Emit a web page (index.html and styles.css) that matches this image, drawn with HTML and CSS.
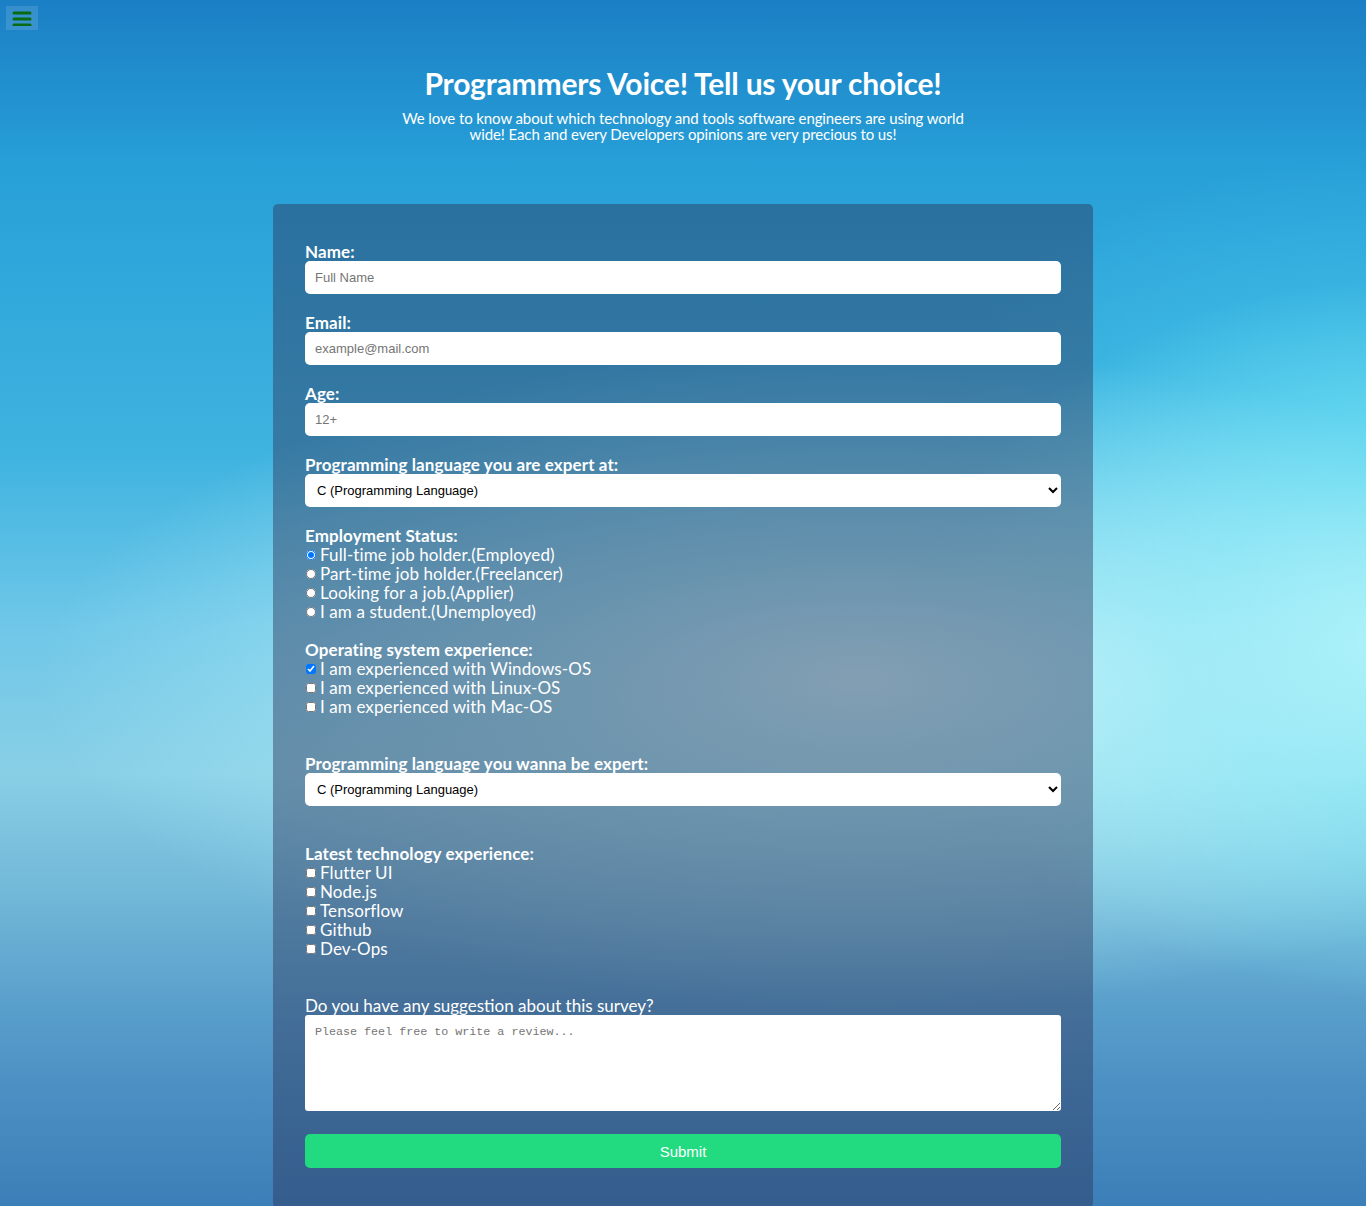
FILE: index.html
```html
<!DOCTYPE html>
<html lang="en">
<head>
<meta charset="utf-8">
<title>Programmers Voice Survey</title>
<link rel="stylesheet" href="styles.css">
</head>
<body>
<button class="menu-btn" aria-label="Menu">
  <svg width="20" height="16" viewBox="0 0 20 16"><g stroke="#0a6a12" stroke-width="3" stroke-linecap="round"><line x1="2" y1="3" x2="18" y2="3"/><line x1="2" y1="9" x2="18" y2="9"/><line x1="2" y1="15" x2="18" y2="15"/></g></svg>
</button>
<header class="header">
  <h1 class="title">Programmers Voice! Tell us your choice!</h1>
  <p class="subtitle">We love to know about which technology and tools software engineers are using world wide! Each and every Developers opinions are very precious to us!</p>
</header>
<form class="survey">
  <div class="group">
    <label class="label" for="name">Name:</label>
    <input class="field" id="name" type="text" placeholder="Full Name">
  </div>
  <div class="group">
    <label class="label" for="email">Email:</label>
    <input class="field" id="email" type="email" placeholder="example@mail.com">
  </div>
  <div class="group">
    <label class="label" for="age">Age:</label>
    <input class="field" id="age" type="number" placeholder="12+">
  </div>
  <div class="group">
    <label class="label" for="lang">Programming language you are expert at:</label>
    <select class="field select" id="lang">
      <option>C (Programming Language)</option>
      <option>C++</option>
      <option>Java</option>
      <option>Python</option>
      <option>JavaScript</option>
    </select>
  </div>
  <div class="group">
    <div class="label">Employment Status:</div>
    <label class="opt"><input class="radio" type="radio" name="emp" checked>Full-time job holder.(Employed)</label>
    <label class="opt"><input class="radio" type="radio" name="emp">Part-time job holder.(Freelancer)</label>
    <label class="opt"><input class="radio" type="radio" name="emp">Looking for a job.(Applier)</label>
    <label class="opt"><input class="radio" type="radio" name="emp">I am a student.(Unemployed)</label>
  </div>
  <div class="group wide">
    <div class="label">Operating system experience:</div>
    <label class="opt"><input class="check" type="checkbox" checked>I am experienced with Windows-OS</label>
    <label class="opt"><input class="check" type="checkbox">I am experienced with Linux-OS</label>
    <label class="opt"><input class="check" type="checkbox">I am experienced with Mac-OS</label>
  </div>
  <div class="group wide">
    <label class="label" for="lang2">Programming language you wanna be expert:</label>
    <select class="field select" id="lang2">
      <option>C (Programming Language)</option>
      <option>C++</option>
      <option>Java</option>
      <option>Python</option>
      <option>JavaScript</option>
    </select>
  </div>
  <div class="group wide">
    <div class="label">Latest technology experience:</div>
    <label class="opt"><input class="check" type="checkbox">Flutter UI</label>
    <label class="opt"><input class="check" type="checkbox">Node.js</label>
    <label class="opt"><input class="check" type="checkbox">Tensorflow</label>
    <label class="opt"><input class="check" type="checkbox">Github</label>
    <label class="opt"><input class="check" type="checkbox">Dev-Ops</label>
  </div>
  <div class="group last">
    <label class="label plain" for="review">Do you have any suggestion about this survey?</label>
    <textarea class="area" id="review" placeholder="Please feel free to write a review..."></textarea>
  </div>
  <button class="submit" type="submit">Submit</button>
</form>
</body>
</html>
```
FILE: styles.css
```css
* { box-sizing: border-box; }

html, body { margin: 0; }

body {
  min-height: 1206px;
  font-family: Lato, "Open Sans", sans-serif;
  color: #fff;
  background:
    radial-gradient(ellipse 820px 330px at 860px 680px, rgba(210, 250, 254, 0.9) 0%, rgba(185, 243, 250, 0.6) 40%, rgba(170, 240, 250, 0) 100%),
    radial-gradient(ellipse 480px 360px at 1400px 640px, rgba(168, 242, 250, 1) 0%, rgba(130, 232, 246, 0.7) 45%, rgba(110, 225, 244, 0) 100%),
    radial-gradient(ellipse 420px 260px at 1366px 420px, rgba(70, 205, 238, 0.6) 0%, rgba(70, 205, 238, 0) 100%),
    linear-gradient(to bottom, #1b7fc5 0%, #27a0d8 14%, #40b4e0 38%, #6fc7e8 52%, #88cfe6 64%, #72b8d8 74%, #5aa0cc 83%, #4a8ec2 91%, #3c7fb8 100%);
  background-repeat: no-repeat;
  background-size: 100% 1206px;
}

.menu-btn {
  position: fixed;
  top: 6px;
  left: 6px;
  width: 32px;
  height: 24px;
  padding: 0;
  border: none;
  background: rgba(255, 255, 255, 0.12);
  display: flex;
  align-items: center;
  justify-content: center;
}

.header {
  text-align: center;
  padding-top: 65px;
}

.title {
  margin: 0;
  font-size: 30px;
  line-height: 36px;
  font-weight: 700;
  letter-spacing: -0.2px;
}

.subtitle {
  margin: 9px auto 0;
  max-width: 580px;
  font-size: 15px;
  line-height: 16px;
  letter-spacing: -0.1px;
}

.survey {
  width: 820px;
  margin: 62px auto 0;
  padding: 38px 32px 40px;
  border-radius: 5px;
  background: rgba(45, 53, 90, 0.45);
}

.group { margin-bottom: 19px; }
.group.wide { margin-bottom: 38px; }
.group.last { margin-bottom: 0; }

.label {
  display: block;
  font-size: 17px;
  line-height: 19px;
  font-weight: 700;
  letter-spacing: 0.1px;
}

.label.plain {
  font-weight: 400;
  letter-spacing: 0;
}

.field {
  display: block;
  width: 100%;
  height: 33px;
  border: none;
  border-radius: 5px;
  padding: 0 10px;
  background: #fff;
  font-family: "Liberation Sans", Arial, sans-serif;
  font-size: 13px;
  color: #000;
}

.field::placeholder { color: #757575; }

.select { padding: 0 8px; }

.opt {
  display: flex;
  align-items: center;
  height: 19px;
  font-size: 17px;
  line-height: 19px;
  letter-spacing: 0.1px;
}

.radio, .check {
  width: 10px;
  height: 10px;
  margin: 0 4px 0 1px;
  flex: none;
}

.area {
  display: block;
  width: 100%;
  height: 96px;
  border: none;
  border-radius: 3px;
  padding: 10px;
  font-family: "Liberation Mono", monospace;
  font-size: 11.7px;
  background: #fff;
}

.area::placeholder { color: #757575; }

.submit {
  display: block;
  width: 100%;
  height: 34px;
  margin-top: 23px;
  border: none;
  border-radius: 5px;
  background: #22db80;
  color: #fff;
  font-family: "Liberation Sans", Arial, sans-serif;
  font-size: 15px;
}
```
